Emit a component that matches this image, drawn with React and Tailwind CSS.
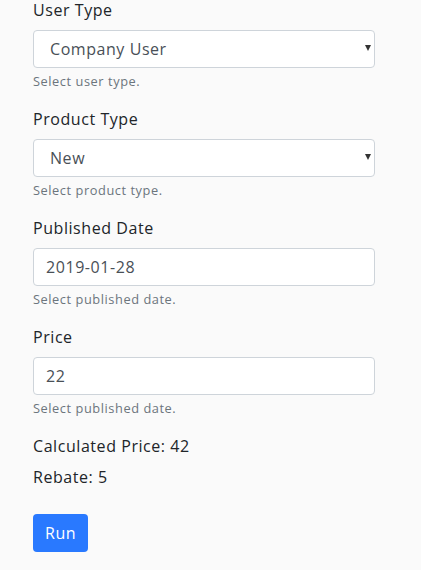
import { useState } from "react";

function Field({ label, help, children }) {
  return (
    <div className="mb-4">
      <label className="mb-2 block text-base leading-6 text-[#212529]">
        {label}
      </label>
      {children}
      <small className="mt-1 block text-[12.8px] leading-[19px] text-[#6c757d]">
        {help}
      </small>
    </div>
  );
}

function SelectBox({ value, options }) {
  return (
    <div className="relative">
      <select
        defaultValue={value}
        className="block h-[38px] w-full appearance-none rounded border border-[#ced4da] bg-white pl-4 pr-8 text-base tracking-[0.035em] text-[#495057] outline-none"
      >
        {options.map((o) => (
          <option key={o}>{o}</option>
        ))}
      </select>
      <span className="pointer-events-none absolute right-[4px] top-[15px] h-0 w-0 border-x-[3px] border-t-[6px] border-x-transparent border-t-[#333]" />
    </div>
  );
}

export default function App() {
  const [date, setDate] = useState("2019-01-28");
  const [price, setPrice] = useState("22");

  return (
    <div
      className="min-h-[570px] bg-[#fafafa] px-[33px] tracking-[0.035em]"
      style={{ fontFamily: '"Open Sans", "Liberation Sans", sans-serif' }}
    >
      <div className="w-[342px] -translate-y-[2px]">
        <Field label="User Type" help="Select user type.">
          <SelectBox value="Company User" options={["Company User", "Private User"]} />
        </Field>
        <Field label="Product Type" help="Select product type.">
          <SelectBox value="New" options={["New", "Used"]} />
        </Field>
        <Field label="Published Date" help="Select published date.">
          <input
            value={date}
            onChange={(e) => setDate(e.target.value)}
            className="block h-[38px] w-full rounded border border-[#ced4da] bg-white px-3 text-base tracking-[0.035em] text-[#495057] outline-none"
          />
        </Field>
        <Field label="Price" help="Select published date.">
          <input
            value={price}
            onChange={(e) => setPrice(e.target.value)}
            className="block h-[38px] w-full rounded border border-[#ced4da] bg-white px-3 text-base tracking-[0.035em] text-[#495057] outline-none"
          />
        </Field>
        <div className="mb-[7px] text-base leading-6 text-[#212529]">
          Calculated Price: 42
        </div>
        <div className="text-base leading-6 text-[#212529]">Rebate: 5</div>
        <button className="mt-[25px] h-[38px] rounded bg-[#2979ff] px-3 text-base tracking-[0.035em] text-white">
          Run
        </button>
      </div>
    </div>
  );
}
